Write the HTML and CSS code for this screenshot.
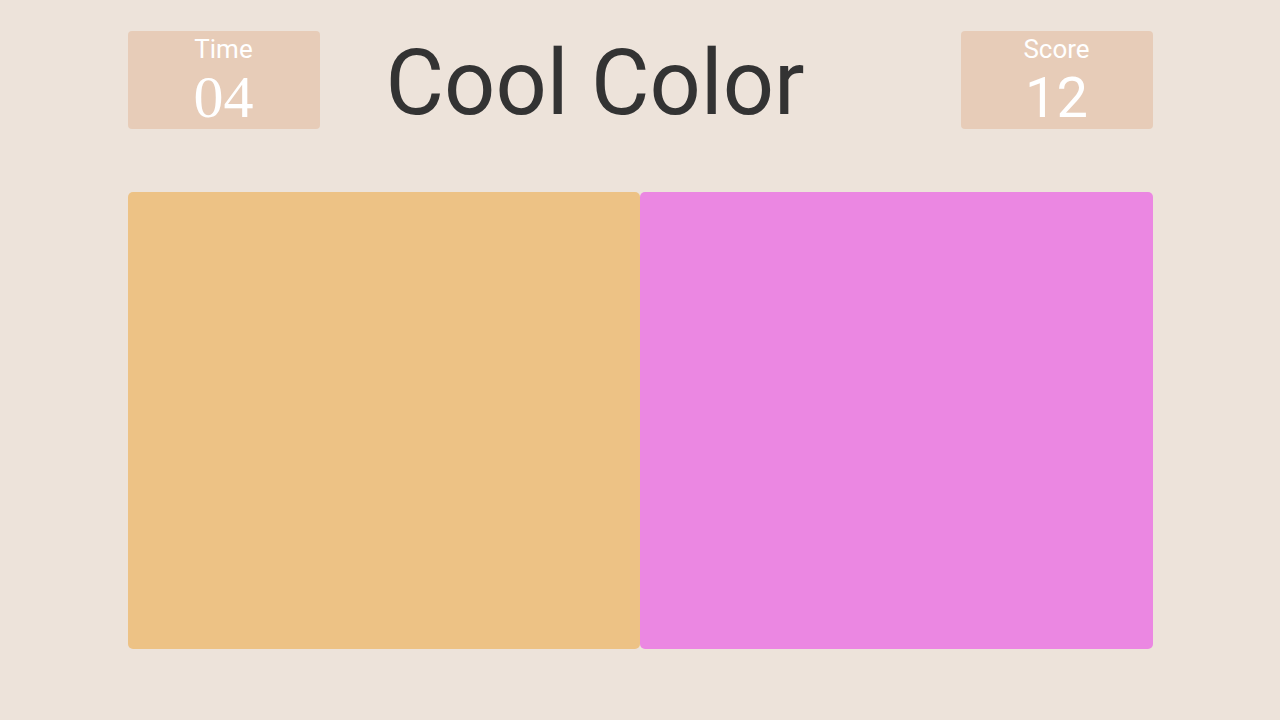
FILE: index.html
```html
<!DOCTYPE html>
<html>
<head>
<meta charset="utf-8">
<link rel="stylesheet" href="styles.css">
</head>
<body>
<div class="game">
  <header class="top">
    <div class="stat">
      <div class="stat-label">Time</div>
      <div class="stat-value serif">04</div>
    </div>
    <h1 class="title">Cool Color</h1>
    <div class="stat">
      <div class="stat-label">Score</div>
      <div class="stat-value">12</div>
    </div>
  </header>
  <main class="board">
    <div class="tile tile-orange"></div>
    <div class="tile tile-pink"></div>
  </main>
</div>
</body>
</html>
```
FILE: styles.css
```css
html, body {
  margin: 0;
  padding: 0;
  background: #ede3da;
  font-family: Roboto, "Noto Sans", sans-serif;
}
.game {
  width: 1025px;
  margin: 0 auto;
  padding-top: 31px;
}
.top {
  display: grid;
  grid-template-columns: 192px 1fr 192px;
  align-items: start;
  height: 99px;
}
.stat {
  background: #e7ccb8;
  border-radius: 4px;
  height: 98px;
  color: #ffffff;
  display: flex;
  flex-direction: column;
  align-items: center;
}
.stat-label {
  font-size: 26px;
  line-height: 30px;
  margin-top: 3px;
}
.stat-value {
  font-size: 56px;
  line-height: 56px;
  margin-top: 6px;
}
.stat-value.serif {
  font-family: "Liberation Serif", serif;
  font-size: 60px;
  margin-top: 5px;
}
.title {
  margin: 0;
  padding-left: 66px;
  font-weight: 400;
  font-size: 90px;
  line-height: 110px;
  margin-top: -2px;
  color: #333333;
}
.board {
  margin-top: 62px;
  display: flex;
  height: 457px;
}
.tile {
  flex: 1;
  border-radius: 5px;
}
.tile-orange { background: #edc285; }
.tile-pink { background: #eb87e2; }
```
